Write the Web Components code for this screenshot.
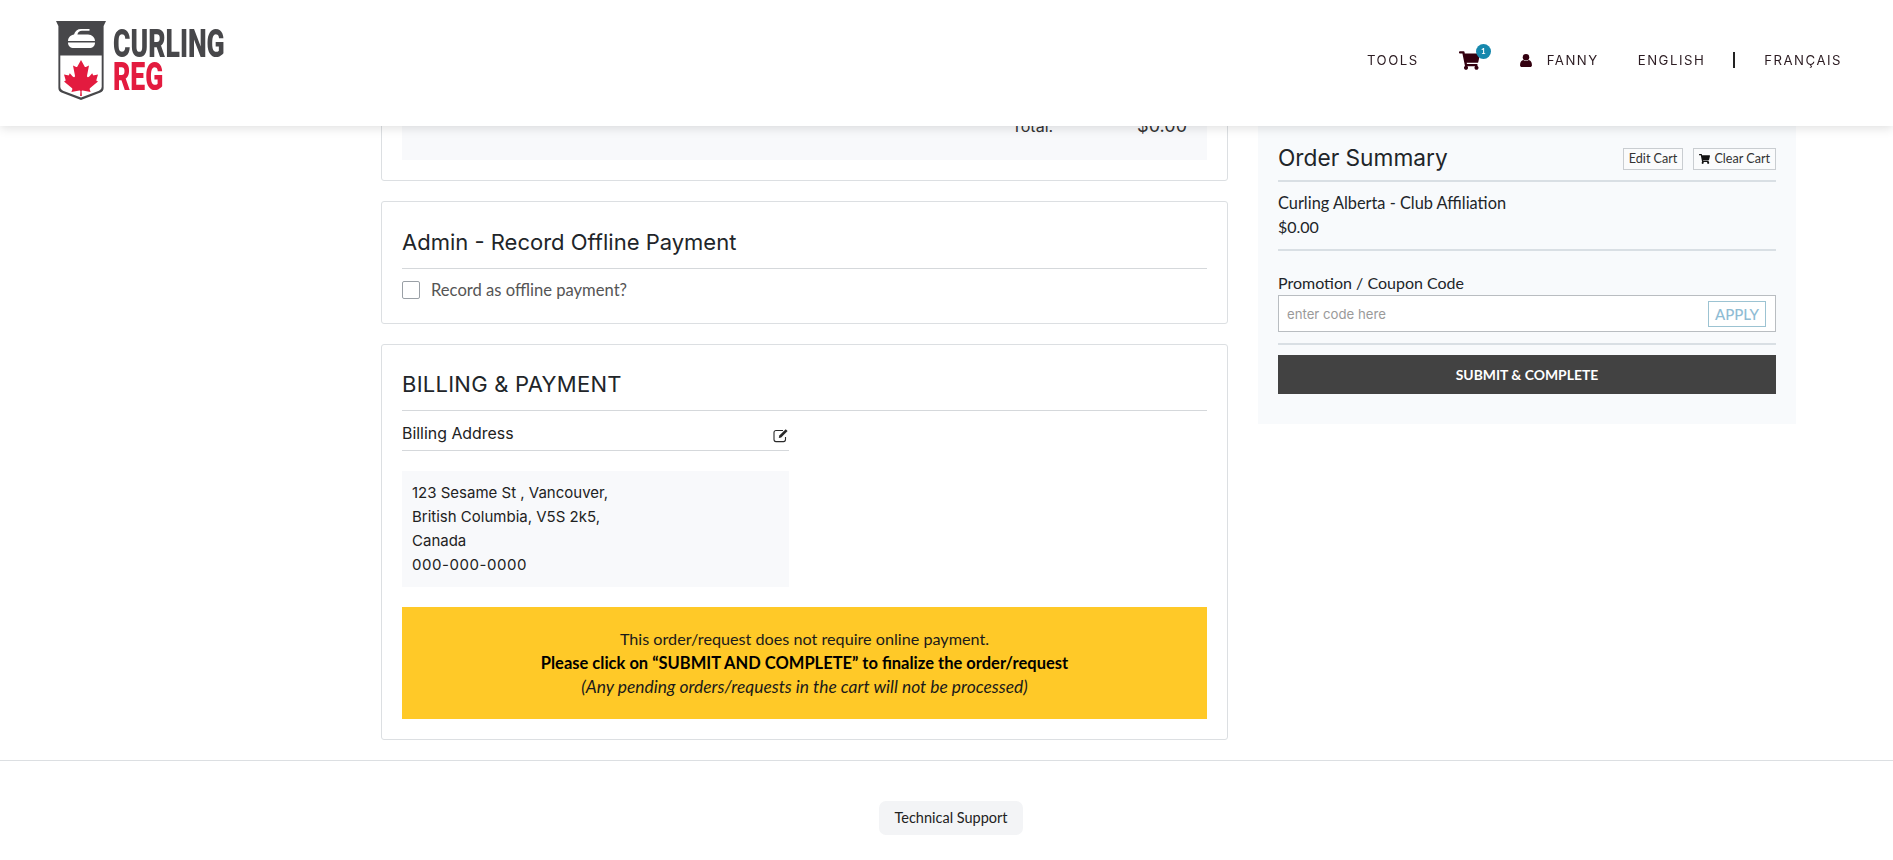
<!DOCTYPE html>
<html lang="en"><head><meta charset="utf-8"><title>Curling Reg</title>
<style>
html,body{margin:0;padding:0;background:#fff;color:#212529;font-family:Lato,"Noto Sans",sans-serif;font-size:16px}
body{height:860px;overflow:hidden}
</style></head><body>
<cr-header></cr-header>
<cr-page>
  <cr-card slot="main" variant="clipped"><cr-total></cr-total></cr-card>
  <cr-card slot="main" heading="Admin - Record Offline Payment" variant="admin"><cr-check>Record as offline payment?</cr-check></cr-card>
  <cr-card slot="main" heading="BILLING &amp; PAYMENT" variant="billing">
    <cr-billing></cr-billing>
    <cr-notice></cr-notice>
  </cr-card>
  <cr-summary slot="side"></cr-summary>
</cr-page>
<cr-footer></cr-footer>
<script>
const CART='M528.12 301.319l47.273-208C578.806 78.301 567.391 64 551.99 64H159.208l-9.166-44.81C147.758 8.021 137.93 0 126.529 0H24C10.745 0 0 10.745 0 24v16c0 13.255 10.745 24 24 24h69.883l70.248 343.435C147.325 417.1 136 435.222 136 456c0 30.928 25.072 56 56 56s56-25.072 56-56c0-15.674-6.447-29.835-16.824-40h209.647C430.447 426.165 424 440.326 424 456c0 30.928 25.072 56 56 56s56-25.072 56-56c0-22.172-12.888-41.332-31.579-50.405l5.517-24.276c3.413-15.018-8.002-29.319-23.403-29.319H218.117l-6.545-32h293.145c11.206 0 20.92-7.754 23.403-18.681z';
function def(name,html,init){
  customElements.define(name,class extends HTMLElement{
    constructor(){super();this.attachShadow({mode:'open'}).innerHTML=html;}
    connectedCallback(){if(init)init(this);}
  });
}
def('cr-logo',`<style>
:host{display:flex;align-items:flex-start;gap:7px;width:170px}
svg{display:block;width:50px;height:79px;flex:none}
.t{display:flex;flex-direction:column;padding-top:7px;font-family:Roboto,"Liberation Sans",sans-serif;font-weight:900;font-size:38px;line-height:33px}
.t span{display:block;width:max-content;transform:scaleX(.70);transform-origin:0 50%}
.a{color:#47474a}.b{color:#e31b3f}
</style>
<svg viewBox="56 21 50 79" aria-hidden="true">
<path fill="#47474a" d="M56 21H106L103.6 26V88Q103.6 91 100.5 92.5L81 100 61.5 92.5Q58.4 91 58.4 88V26Z"/>
<path fill="#fff" d="M60.3 55.5H101.7V87Q101.7 89.8 99 90.8L81 97.4 63 90.8Q60.3 89.8 60.3 87Z"/>
<path fill="#fff" d="M68 41C68 37.5 71 35 74 34.6 75 31 77.5 29 81 29H89.5V30.8H82C79.5 30.8 78 32.2 77.4 34.4H88C92 34.6 95 37.5 95 41ZM68 42.5H95C95 46 93 48 89 48H74C70 48 68 46 68 42.5Z"/>
<path fill="#e31b3f" d="M81 60 84.6 66.6C85 67.3 85.7 67.2 86.4 66.8L89 65.4 87.1 75.3C86.7 77.2 88 77.8 89.3 76.4L92.2 73.3 93 75C93.2 75.5 93.7 75.4 94.2 75.3L98 74.5 96.6 79.2C96.3 80.2 96.2 80.7 97 81L98 81.6 90.2 87.9C89.4 88.6 89.6 89 89.9 89.9L90.6 92 82.6 90.6C82 90.5 81.6 90.8 81.6 91.4L81.9 96H80.1L80.4 91.4C80.4 90.8 80 90.5 79.4 90.6L71.4 92 72.1 89.9C72.4 89 72.6 88.6 71.8 87.9L64 81.6 65 81C65.8 80.7 65.7 80.2 65.4 79.2L64 74.5 67.8 75.3C68.3 75.4 68.8 75.5 69 75L69.8 73.3 72.7 76.4C74 77.8 75.3 77.2 74.9 75.3L73 65.4 75.6 66.8C76.3 67.2 77 67.3 77.4 66.6Z"/>
</svg>
<div class="t"><span class="a">CURLING</span><span class="b">REG</span></div>`);
def('cr-nav',`<style>
:host{display:flex;align-items:center;font-family:Inter,Lato,sans-serif;font-size:13.2px;letter-spacing:1.5px;color:#2c1c22}
span,a{white-space:nowrap}
.cart{position:relative;display:block;width:21px;height:19px;margin:1px 0 0 40px}
svg{display:block;fill:#33000f}
.cart svg{width:21px;height:19px}
.badge{position:absolute;left:17px;top:-7px;width:15px;height:15px;border-radius:50%;background:#1688ad;color:#fff;font:700 8px/15px Lato,sans-serif;letter-spacing:0;text-align:center}
.user{width:12px;height:13px;margin:1px 0 0 40px}
.fanny{margin-left:15px}
.en{margin-left:39px}
.bar{width:2px;height:16px;background:#222;margin:0 29px 0 28px}
</style>
<span>TOOLS</span>
<div class="cart"><svg viewBox="0 0 576 512"><path d="${CART}"/></svg><div class="badge">1</div></div>
<svg class="user" viewBox="0 0 11 12"><circle cx="5.5" cy="3" r="3"/><path d="M0 10.3C0 7.5 1.4 5.8 3 5.6 4.2 6.8 6.8 6.8 8 5.6 9.6 5.8 11 7.5 11 10.3 11 11.4 10.2 12 9.4 12H1.6C.8 12 0 11.4 0 10.3Z"/></svg>
<span class="fanny">FANNY</span><span class="en">ENGLISH</span><div class="bar"></div><span>FRANÇAIS</span>`);
def('cr-header',`<style>
:host{position:fixed;left:0;top:0;right:0;z-index:10;height:126px;background:#fff;display:flex;justify-content:space-between;align-items:flex-start;padding:21px 51px 0 56px;box-sizing:border-box;box-shadow:0 2px 10px rgba(0,0,0,.13)}
cr-nav{margin-top:29px}
</style><cr-logo></cr-logo><cr-nav></cr-nav>`);
def('cr-page',`<style>
:host{display:grid;grid-template-columns:847px 538px;column-gap:30px;padding:0 97px 0 381px;align-items:start}
.m{display:flex;flex-direction:column;gap:20px}
.s{padding-top:126px}
</style><div class="m"><slot name="main"></slot></div><div class="s"><slot name="side"></slot></div>`);
def('cr-card',`<style>
:host{display:block;box-sizing:border-box;border:1px solid #dcdfe2;border-radius:3px;padding:20px;background:#fff}
:host([variant=clipped]){height:181px;padding-top:0;display:flex;flex-direction:column}
:host([variant=admin]){height:123px;padding-top:22px}
:host([variant=billing]){height:396px;padding-top:21px}
h2{margin:0;padding:0 0 8px;font:400 22px/36px Inter,Lato,sans-serif;color:#212529;border-bottom:1px solid #d5d8db}
:host([variant=clipped]) h2{display:none}
:host([variant=billing]) h2{letter-spacing:.25px;padding-bottom:8px}
</style><h2></h2><slot></slot>`,el=>{el.shadowRoot.querySelector('h2').textContent=el.getAttribute('heading')||''});
def('cr-total',`<style>
:host{flex:1;display:flex;justify-content:flex-end;align-items:flex-end;gap:84px;background:#f8f9fb;padding:0 20px 23px;font:400 16px/22px Inter,Lato,sans-serif;color:#333}
.p{font-size:18px}
</style><span>Total:</span><span class="p">$0.00</span>`);
def('cr-check',`<style>
:host{display:flex;align-items:center;gap:11px;margin-top:12px;font-size:16.6px;line-height:17px;color:#555}
i{display:block;box-sizing:border-box;width:18px;height:18px;border:1px solid #9aa0a6;border-radius:2px;background:#fff}
</style><i></i><span><slot></slot></span>`);
def('cr-billing',`<style>
:host{display:block;width:387px;font:400 16px/24px Inter,Lato,sans-serif;color:#222}
.h{display:flex;justify-content:space-between;align-items:center;height:40px;padding-top:7px;border-bottom:1px solid #d5d8db;box-sizing:border-box;font-size:15.9px}
svg{display:block;margin:3px -1px 0 0}
.b{margin-top:20px;background:#f8f9fb;padding:10px 10px 10px;height:116px;box-sizing:border-box;font-size:15px}
.n{letter-spacing:.55px}
</style><div class="h"><span>Billing Address</span>
<svg width="17" height="15" viewBox="0 0 17 15" fill="none"><path d="M12.5 9v2.6a2 2 0 0 1-2 2H3a2 2 0 0 1-2-2V4.5a2 2 0 0 1 2-2h7" stroke="#2a2a2a" stroke-width="1.1"/><path d="M5.8 10l.5-2.4L12.7 1.2l1.9 1.9-6.4 6.4z" fill="#2a2a2a"/></svg></div>
<div class="b">123 Sesame St , Vancouver,<br>British Columbia, V5S 2k5,<br>Canada<br><span class="n">000-000-0000</span></div>`);
def('cr-notice',`<style>
:host{display:block;margin-top:20px;background:#ffc928;padding:20px 0 20px;height:112px;box-sizing:border-box;text-align:center;font-size:16.2px;line-height:24px;color:#1a1a1a}
p{margin:0}b{font-weight:700;color:#000;font-size:16.5px}i{font-size:17.4px}
</style><p>This order/request does not require online payment.</p><p><b>Please click on “SUBMIT AND COMPLETE” to finalize the order/request</b></p><p><i>(Any pending orders/requests in the cart will not be processed)</i></p>`);
def('cr-summary',`<style>
:host{display:block;box-sizing:border-box;height:298px;background:#f8fafc;padding:0 20px;font-size:16px;color:#212529}
.top{display:flex;align-items:center;height:43px;padding-top:11px;border-bottom:2px solid #d9dfe4;box-sizing:content-box}
h3{margin:-2px 0 0;flex:1;font:400 22.7px/30px Inter,Lato,sans-serif}
.btn{display:flex;align-items:center;gap:4px;height:22px;box-sizing:border-box;border:1px solid #c9cdd1;padding:0 5px;font-size:12.6px;background:#fafbfc;color:#333}
.btn+.btn{margin-left:10px;padding:0 5px}
svg{width:11px;height:10px;fill:#111;display:block}
.item{padding:9px 0 11px;line-height:24px;height:47px;border-bottom:2px solid #d9dfe4;box-sizing:content-box;font-size:16px}
.item span{font-size:16.35px}
.lab{margin-top:20px;line-height:24px}
.inp{display:flex;justify-content:space-between;align-items:center;box-sizing:border-box;height:37px;border:1px solid #b9bdc1;background:#fff;padding:0 9px 0 8px;font:400 13.2px Inter,Lato,sans-serif;color:#9a9a9a}
.ap{display:block;box-sizing:border-box;border:1px solid #9cc3d2;width:58px;height:26px;text-align:center;font:500 15px/24px Lato,sans-serif;color:#8fbcd4}
.hr{height:2px;background:#d9dfe4;margin-top:11px}
.go{margin-top:10px;height:39px;background:#424242;color:#fff;display:flex;align-items:center;justify-content:center;font-weight:700;font-size:13.9px}
</style><div class="top"><h3>Order Summary</h3><div class="btn">Edit Cart</div><div class="btn"><svg viewBox="0 0 576 512"><path d="${CART}"/></svg>Clear Cart</div></div>
<div class="item"><span>Curling Alberta - Club Affiliation</span><br>$0.00</div>
<div class="lab">Promotion / Coupon Code</div>
<div class="inp"><span>enter code here</span><span class="ap">APPLY</span></div>
<div class="hr"></div><div class="go">SUBMIT &amp; COMPLETE</div>`);
def('cr-footer',`<style>
:host{display:flex;justify-content:center;margin-top:20px;border-top:1px solid #dcdfe2;padding:40px 0 0 9px}
a{display:flex;align-items:center;justify-content:center;width:144px;height:34px;padding-bottom:2px;box-sizing:border-box;background:#f3f4f6;border-radius:7px;font-size:14.5px;color:#222}
</style><a>Technical Support</a>`);
</script>
</body></html>
